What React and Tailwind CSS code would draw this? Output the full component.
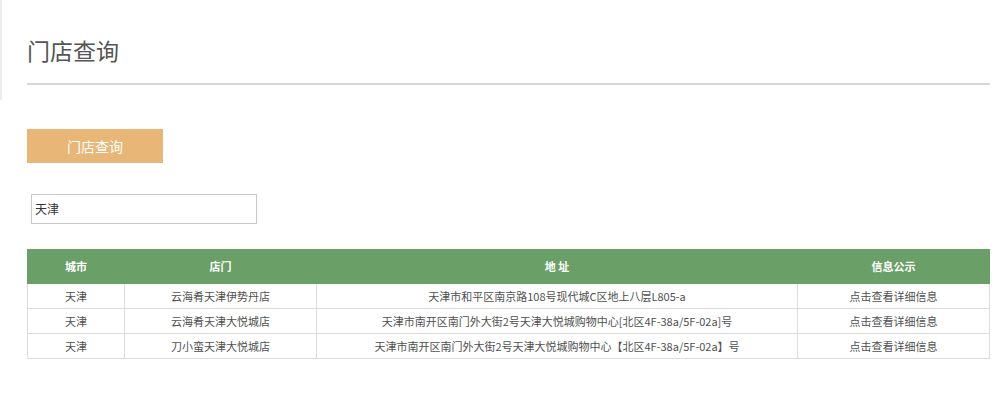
import React from 'react';

const stores = [
  { city: '天津', name: '云海肴天津伊势丹店', addr: '天津市和平区南京路108号现代城C区地上八层L805-a' },
  { city: '天津', name: '云海肴天津大悦城店', addr: '天津市南开区南门外大街2号天津大悦城购物中心[北区4F-38a/5F-02a]号' },
  { city: '天津', name: '刀小蛮天津大悦城店', addr: '天津市南开区南门外大街2号天津大悦城购物中心【北区4F-38a/5F-02a】号' },
];

export default function App() {
  return (
    <div
      className="flex w-[1000px] h-[399px] bg-white overflow-hidden"
      style={{ fontFamily: '"Microsoft YaHei", "Noto Sans CJK SC", sans-serif' }}
    >
      <div className="w-[2px] h-[100px] bg-[#ececec] shrink-0"></div>
      <div className="flex-1 pl-[25px] pr-[11px]">
        <h1 className="pt-[34px] text-[23px] leading-[32px] text-[#555] font-normal">门店查询</h1>
        <div className="mt-[17px] h-[2px] bg-[#d6d6d6]"></div>

        <div className="mt-[44px] w-[136px] h-[34px] bg-[#e8b676] text-white text-[14px] flex items-center justify-center">
          门店查询
        </div>

        <div className="mt-[31px] ml-[4px] w-[226px] h-[30px] border border-[#c8c8c8] flex items-center pl-[3px] text-[12px] text-[#333]">
          天津
        </div>

        <table className="mt-[25px] w-[962px] border-collapse text-[11px] text-[#505050] table-fixed">
          <colgroup>
            <col className="w-[97px]" />
            <col className="w-[192px]" />
            <col className="w-[481px]" />
            <col className="w-[192px]" />
          </colgroup>
          <thead>
            <tr className="bg-[#6a9f67] text-white h-[34px]">
              <th className="font-bold text-[11px] border border-[#6a9f67]">城市</th>
              <th className="font-bold text-[11px] border border-[#6a9f67]">店门</th>
              <th className="font-bold text-[11px] border border-[#6a9f67]">地 址</th>
              <th className="font-bold text-[11px] border border-[#6a9f67]">信息公示</th>
            </tr>
          </thead>
          <tbody>
            {stores.map((s, i) => (
              <tr key={i} className="h-[25px]">
                <td className="border border-[#dcdcdc] text-center">{s.city}</td>
                <td className="border border-[#dcdcdc] text-center">{s.name}</td>
                <td className="border border-[#dcdcdc] text-center">{s.addr}</td>
                <td className="border border-[#dcdcdc] text-center">点击查看详细信息</td>
              </tr>
            ))}
          </tbody>
        </table>
      </div>
    </div>
  );
}
